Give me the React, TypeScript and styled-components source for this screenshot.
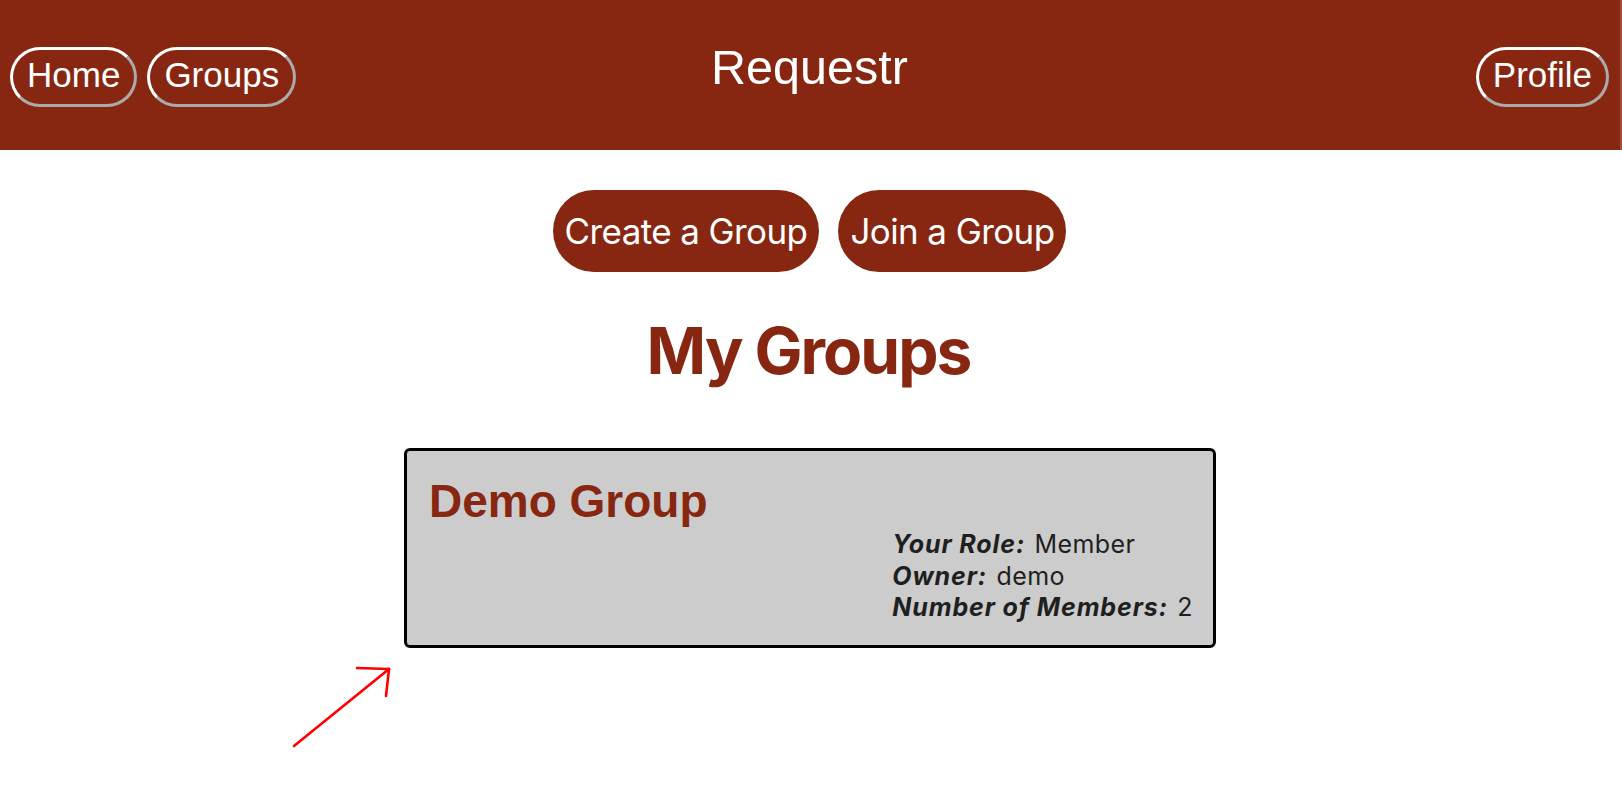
import React from "react";
import styled, { createGlobalStyle } from "styled-components";

const RED = "#872711";

const GlobalStyle = createGlobalStyle`
  html, body {
    margin: 0;
    padding: 0;
    background: #ffffff;
  }
  body {
    font-family: Inter, "Noto Sans", sans-serif;
  }
  * { box-sizing: border-box; }
`;

const Page = styled.div`
  position: relative;
  width: 1622px;
  min-height: 800px;
  overflow: hidden;
`;

const Header = styled.header`
  display: grid;
  grid-template-columns: 1fr auto 1fr;
  align-items: start;
  height: 150px;
  padding: 0 13px 0 10px;
  background: ${RED};
  box-shadow: inset -2px 0 0 #a5503e;
`;

const NavGroup = styled.nav<{ $end?: boolean }>`
  display: flex;
  gap: 10px;
  padding-top: 47px;
  justify-content: ${(p) => (p.$end ? "flex-end" : "flex-start")};
`;

const NavButton = styled.button`
  height: 60px;
  padding: 0 14px 4px;
  border: 3px outset #ffffff;
  border-radius: 30px;
  background: transparent;
  color: #ffffff;
  font-family: "Liberation Sans", Arial, sans-serif;
  font-size: 35px;
  line-height: 40px;
  cursor: pointer;
`;

const Brand = styled.h1`
  margin: 40px 0 0 0;
  font-family: "Liberation Sans", Arial, sans-serif;
  font-weight: 400;
  font-size: 48.5px;
  line-height: 55px;
  color: #ffffff;
`;

const Main = styled.main`
  display: flex;
  flex-direction: column;
  align-items: stretch;
  padding-top: 40px;
`;

const ActionRow = styled.div`
  display: flex;
  justify-content: center;
  gap: 19px;
  padding-right: 3px;
`;

const ActionButton = styled.button`
  padding: 20px 12px;
  border: none;
  border-radius: 41px;
  background: ${RED};
  color: #ffffff;
  font-family: Inter, "Noto Sans", sans-serif;
  font-size: 35px;
  letter-spacing: -0.6px;
  line-height: 42px;
  cursor: pointer;
`;

const PageTitle = styled.h2`
  margin: 40px 0 59px;
  padding-right: 5px;
  text-align: center;
  font-family: Inter, "Noto Sans", sans-serif;
  font-weight: 700;
  font-size: 64px;
  letter-spacing: -2px;
  line-height: 77px;
  color: ${RED};
`;

const GroupCard = styled.article`
  display: flex;
  flex-direction: column;
  width: 812px;
  height: 200px;
  margin: 0 auto;
  position: relative;
  left: -1px;
  padding: 24px 20px 21px 22px;
  border: 3px solid #000000;
  border-radius: 6px;
  background: #cccccc;
`;

const GroupName = styled.h3`
  margin: 0;
  font-family: "Liberation Sans", Arial, sans-serif;
  font-weight: 700;
  font-size: 46px;
  line-height: 53px;
  color: ${RED};
`;

const InfoList = styled.div`
  align-self: flex-end;
  display: flex;
  flex-direction: column;
  margin-top: 1px;
`;

const InfoLine = styled.div`
  font-family: Inter, "Noto Sans", sans-serif;
  font-size: 25px;
  letter-spacing: 0.4px;
  line-height: 31.5px;
  color: #1f1f1f;
  white-space: nowrap;
`;

const InfoLabel = styled.span`
  font-weight: 700;
  font-style: italic;
  letter-spacing: 0.9px;
  margin-right: 2px;
`;

const Annotation = styled.svg`
  position: absolute;
  left: 285px;
  top: 660px;
  overflow: visible;
`;

const info: [string, string][] = [
  ["Your Role:", "Member"],
  ["Owner:", "demo"],
  ["Number of Members:", "2"],
];

export default function App() {
  return (
    <Page>
      <GlobalStyle />
      <Header>
        <NavGroup>
          <NavButton>Home</NavButton>
          <NavButton>Groups</NavButton>
        </NavGroup>
        <Brand>Requestr</Brand>
        <NavGroup $end>
          <NavButton>Profile</NavButton>
        </NavGroup>
      </Header>
      <Main>
        <ActionRow>
          <ActionButton>Create a Group</ActionButton>
          <ActionButton>Join a Group</ActionButton>
        </ActionRow>
        <PageTitle>My Groups</PageTitle>
        <GroupCard>
          <GroupName>Demo Group</GroupName>
          <InfoList>
            {info.map(([label, value]) => (
              <InfoLine key={label}>
                <InfoLabel>{label}</InfoLabel> {value}
              </InfoLine>
            ))}
          </InfoList>
        </GroupCard>
      </Main>
      <Annotation width="110" height="100" viewBox="0 0 110 100">
        <g stroke="#ff0000" strokeWidth="2.6" strokeLinecap="round" fill="none">
          <line x1="9" y1="86" x2="104" y2="9" />
          <line x1="104" y1="9" x2="72" y2="8" />
          <line x1="104" y1="9" x2="101" y2="36" />
        </g>
      </Annotation>
    </Page>
  );
}
